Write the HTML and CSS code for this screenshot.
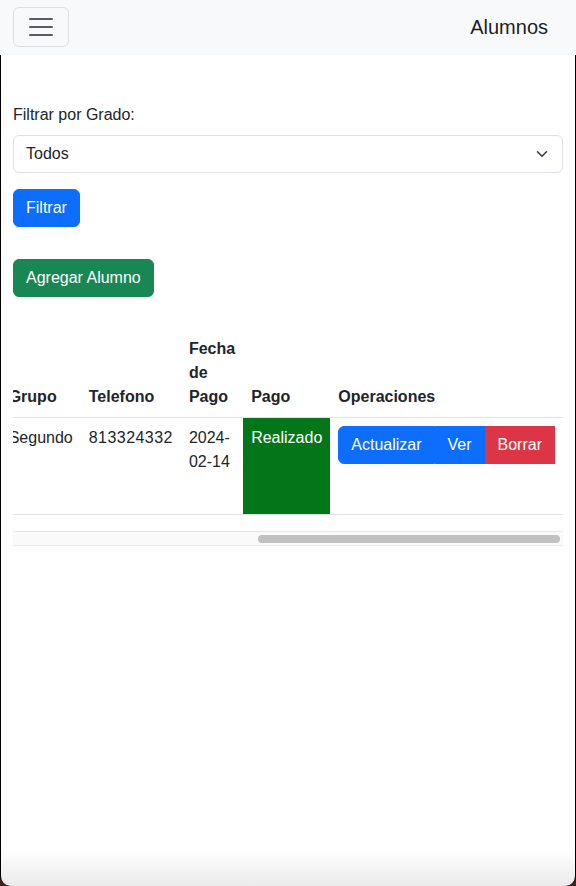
FILE: index.html
```html
<!DOCTYPE html>
<html lang="es">
<head>
<meta charset="utf-8">
<title>Alumnos</title>
<link rel="stylesheet" href="styles.css">
</head>
<body>
  <nav class="navbar">
    <button class="toggler" type="button" aria-label="Menú">
      <svg width="30" height="30" viewBox="0 0 30 30"><path d="M4 7h22M4 15h22M4 23h22" stroke="rgba(33,37,41,0.75)" stroke-width="2" stroke-linecap="round" fill="none"/></svg>
    </button>
    <span class="brand">Alumnos</span>
  </nav>
  <div class="page">
    <main class="container">
      <form class="filter">
        <label class="form-label">Filtrar por Grado:</label>
        <div class="select">
          <span>Todos</span>
          <svg width="16" height="12" viewBox="0 0 16 16"><path d="m2 5 6 6 6-6" fill="none" stroke="#343a40" stroke-width="2" stroke-linecap="round" stroke-linejoin="round"/></svg>
        </div>
        <button class="btn btn-primary" type="button">Filtrar</button>
      </form>
      <div class="actions">
        <a class="btn btn-success" href="#">Agregar Alumno</a>
      </div>
      <div class="table-responsive">
        <table class="table">
          <thead>
            <tr>
              <th>Grupo</th>
              <th class="tel">Telefono</th>
              <th>Fecha de Pago</th>
              <th>Pago</th>
              <th>Operaciones</th>
            </tr>
          </thead>
          <tbody>
            <tr>
              <td>Segundo</td>
              <td class="tel">813324332</td>
              <td>2024-<wbr>02-14</td>
              <td class="pago-ok">Realizado</td>
              <td>
                <div class="btn-group">
                  <a class="btn btn-primary" href="#">Actualizar</a>
                  <a class="btn btn-primary" href="#">Ver</a>
                  <button class="btn btn-danger" type="button">Borrar</button>
                </div>
              </td>
            </tr>
          </tbody>
        </table>
      </div>
      <div class="hscroll">
        <div class="hscroll-thumb"></div>
      </div>
    </main>
  </div>
</body>
</html>
```
FILE: styles.css
```css
* { box-sizing: border-box; }

html, body {
  margin: 0;
  height: 100%;
}

body {
  background: #3d2419;
  font-family: "Liberation Sans", Arial, sans-serif;
  font-size: 16px;
  line-height: 1.5;
  color: #212529;
  display: flex;
  flex-direction: column;
  overflow: hidden;
}

.navbar {
  flex-shrink: 0;
  height: 55px;
  background: #f8f9fa;
  padding: 7px 12px 8px 13px;
  display: flex;
  justify-content: space-between;
  align-items: flex-start;
}

.toggler {
  width: 56px;
  height: 40px;
  padding: 4px 12px;
  border: 1px solid rgba(0, 0, 0, 0.1);
  border-radius: 6px;
  background: transparent;
  display: flex;
  align-items: center;
  justify-content: center;
}

.toggler svg { display: block; }

.brand {
  font-size: 20px;
  line-height: 30px;
  padding: 5px 0;
  margin-right: 16px;
  color: rgba(0, 0, 0, 0.9);
}

.page {
  flex: 1;
  border: 1px solid #000;
  border-top: 0;
  border-bottom: 0;
  border-radius: 0 0 10px 10px;
  background: linear-gradient(#ffffff calc(100% - 36px), #eaeaea);
}

.container {
  padding: 48px 12px 0;
}

.filter {
  display: flex;
  flex-direction: column;
  align-items: flex-start;
}

.form-label {
  display: block;
  margin-bottom: 8px;
}

.select {
  align-self: stretch;
  height: 38px;
  border: 1px solid #dee2e6;
  border-radius: 6px;
  padding: 6px 12px;
  display: flex;
  justify-content: space-between;
  align-items: center;
  background: #fff;
}

.select svg { display: block; }

.btn {
  display: inline-block;
  padding: 6px 12px;
  font-family: inherit;
  font-size: 16px;
  line-height: 24px;
  border: 1px solid transparent;
  border-radius: 6px;
  color: #fff;
  text-decoration: none;
  cursor: pointer;
  white-space: nowrap;
}

.btn-primary { background: #0d6efd; border-color: #0d6efd; }
.btn-success { background: #198754; border-color: #198754; }
.btn-danger { background: #dc3545; border-color: #dc3545; }

.filter .btn { margin-top: 16px; }

.actions {
  display: flex;
  margin-top: 32px;
}

.table-responsive {
  margin-top: 32px;
  overflow: hidden;
  direction: rtl;
}

.table {
  direction: ltr;
  width: 100%;
  border-collapse: collapse;
  margin-bottom: 16px;
  color: #212529;
}

.table th,
.table td {
  padding: 8px;
  border-bottom: 1px solid #dee2e6;
  text-align: left;
  vertical-align: top;
}

.table thead th {
  vertical-align: bottom;
  font-weight: 700;
}

.table td.tel {
  letter-spacing: 0.45px;
}

.pago-ok {
  background: #04761a;
  color: #fff;
}

.btn-group {
  display: flex;
  margin-bottom: 42px;
}

.btn-group .btn { border-radius: 0; }
.btn-group .btn:first-child { border-radius: 6px 0 0 6px; }

.hscroll {
  height: 15px;
  background: #fafafa;
  border-top: 1px solid #e6e6e6;
  border-bottom: 1px solid #ececec;
  padding: 3px 3px 2px;
  display: flex;
  justify-content: flex-end;
}

.hscroll-thumb {
  width: 55.5%;
  height: 8px;
  border-radius: 4px;
  background: #c1c1c1;
}
```
